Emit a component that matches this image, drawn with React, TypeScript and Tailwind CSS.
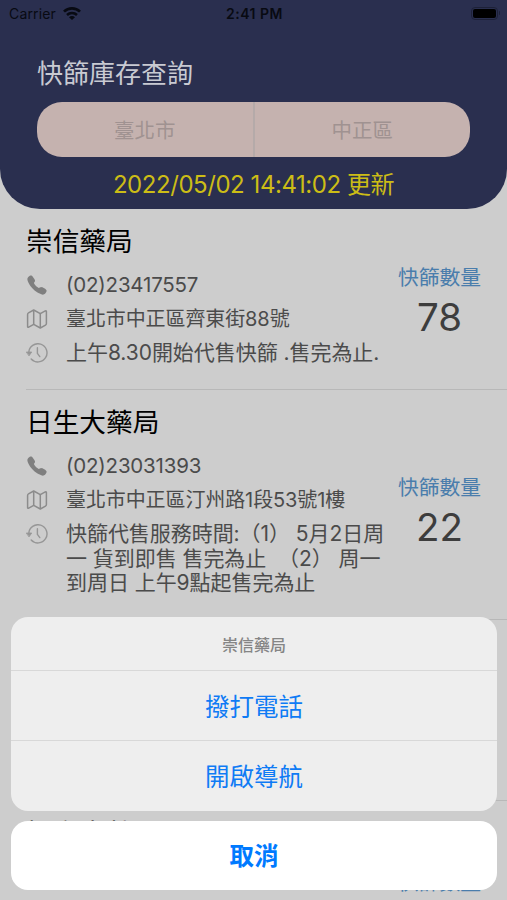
// src/App.tsx
import { IoCall } from "react-icons/io5"

type Pharmacy = {
  name: string
  phone: string
  address: string
  note: string[]
  count: number
  rowClass: string
  countClass: string
}

const pharmacies: Pharmacy[] = [
  {
    name: "崇信藥局",
    phone: "(02)23417557",
    address: "臺北市中正區齊東街88號",
    note: ["上午8.30開始代售快篩 .售完為止."],
    count: 78,
    rowClass: "h-[181px]",
    countClass: "mt-[54px]",
  },
  {
    name: "日生大藥局",
    phone: "(02)23031393",
    address: "臺北市中正區汀州路1段53號1樓",
    note: [
      "快篩代售服務時間:（1） 5月2日周",
      "一 貨到即售 售完為止  （2） 周一",
      "到周日 上午9點起售完為止",
    ],
    count: 22,
    rowClass: "h-[230px]",
    countClass: "mt-[83px]",
  },
  {
    name: "中正藥局",
    phone: "(02)23214567",
    address: "臺北市中正區",
    note: ["售完為止"],
    count: 60,
    rowClass: "h-[181px]",
    countClass: "mt-[54px]",
  },
  {
    name: "恒安大藥局",
    phone: "(02)23517890",
    address: "臺北市中正區",
    note: ["售完為止"],
    count: 45,
    rowClass: "h-[230px]",
    countClass: "mt-[67px]",
  },
]

function MapIcon() {
  return (
    <svg
      viewBox="0 0 22 20"
      className="mt-[8px] h-5 w-[22px] text-[#8c8c8c]"
      fill="none"
      stroke="currentColor"
      strokeWidth="1.5"
      strokeLinejoin="round"
    >
      <path d="M7.7 1 2.5 3.9q-.9.5-.9 1.5v12q0 1.3 1.1.7l5-2.7 6.6 3.6 5.2-2.9q.9-.5.9-1.5v-12q0-1.3-1.1-.7l-5 2.7Z" />
      <path d="M7.7 1v14.4M14.3 4.6v14.4" />
    </svg>
  )
}

function HistoryIcon() {
  return (
    <svg
      viewBox="0 0 22 20"
      className="h-5 w-[22px] text-[#969696]"
      fill="none"
      stroke="currentColor"
      strokeWidth="1.4"
      strokeLinecap="round"
      strokeLinejoin="round"
    >
      <path d="M2.8 9.4A9.1 9.1 0 1 1 5.2 16" />
      <path d="M11.4 4.8v5.6l2.4 3.2" />
      <path d="M.7 9h5L3.2 12.6Z" fill="currentColor" strokeWidth=".8" />
    </svg>
  )
}

function StatusBar() {
  return (
    <div className="grid h-7 grid-cols-3 items-center pr-[7px] pl-[9px] text-[14px] text-[#080a12]">
      <div className="-mt-0.5 flex items-center gap-[7px]">
        <span className="tracking-[0.15px]">Carrier</span>
        <svg viewBox="0 0 18 13" className="h-[13px] w-[18px]" fill="none" stroke="currentColor">
          <path d="M1 4.6a11.5 11.5 0 0 1 16 0" strokeWidth="2.7" />
          <path d="M4 8a7.2 7.2 0 0 1 10 0" strokeWidth="2.5" />
          <path d="M6 10.2a4.2 4.2 0 0 1 6 0L9 13Z" fill="currentColor" stroke="none" />
        </svg>
      </div>
      <span className="-mt-0.5 text-center font-semibold tracking-[0.5px] whitespace-nowrap">2:41 PM</span>
      <div className="-mt-0.5 flex items-center justify-end gap-px">
        <div className="h-[13px] w-[27px] rounded-[4px] border border-[#1d2138] p-px">
          <div className="h-full rounded-[2px] bg-black" />
        </div>
        <div className="h-1 w-[1.5px] rounded-r bg-[#1d2138]" />
      </div>
    </div>
  )
}

function Header() {
  return (
    <header className="h-[209px] shrink-0 rounded-b-[40px] bg-[#2a2f4f]">
      <StatusBar />
      <h1 className="mt-[27px] ml-[37px] h-9 text-[26px] leading-[37px] text-[#c8cad2]">快篩庫存查詢</h1>
      <div className="mx-[37px] mt-[11px] flex h-[55px] overflow-hidden rounded-[25px] bg-[#c5b2af] text-[20.5px] text-[#a09291]">
        <button className="flex-1 border-r-2 border-[#b5aaa9] pt-[3px]">臺北市</button>
        <button className="flex-1 pt-[3px]">中正區</button>
      </div>
      <p className="mt-2.5 text-center text-[24px] leading-9 tracking-[-0.45px] whitespace-nowrap text-[#ccbd16]">
        2022/05/02 14:41:02 更新
      </p>
    </header>
  )
}

function PharmacyRow({ item }: { item: Pharmacy }) {
  return (
    <li className={`ml-[26px] flex shrink-0 border-b border-[#b8b8b8] ${item.rowClass}`}>
      <div className="w-[363px] shrink-0 pt-3.5">
        <h2 className="h-9 text-[26.7px] leading-9 text-black">{item.name}</h2>
        <div className="mt-2 grid grid-cols-[40px_1fr] text-[#4b4b4b]">
          <IoCall className="mt-[7px] size-[22px] text-[#7f7f7f]" />
          <p className="h-[34px] text-[20.5px] leading-[36px] tracking-[-0.2px]">{item.phone}</p>
          <MapIcon />
          <p className="h-[34px] text-[20px] leading-[37px] tracking-[-0.1px] whitespace-nowrap">
            {item.address}
          </p>
          <div className="mt-[8px]">
            <HistoryIcon />
          </div>
          <div className="pt-[6px] text-[21px] leading-[24.7px] tracking-[-0.05px] whitespace-pre">
            {item.note.map((line) => (
              <p key={line}>{line}</p>
            ))}
          </div>
        </div>
      </div>
      <div className={`w-[101px] text-center ${item.countClass}`}>
        <div className="text-[20.8px] leading-[30px] text-[#4a7dac]">快篩數量</div>
        <div className="text-[38.5px] leading-[49px] text-[#3d3d3d]">{item.count}</div>
      </div>
    </li>
  )
}

function ActionSheet({ title }: { title: string }) {
  return (
    <div className="absolute right-[10px] bottom-[10px] left-[11px] flex flex-col gap-2.5 text-[24.5px] text-[#0f7bf5]">
      <div className="h-[194px] divide-y divide-[#d8d8d8] overflow-hidden rounded-[17px] bg-[#eee]">
        <div className="flex h-[54px] items-center justify-center pt-0.5 text-[16px] font-medium text-[#858585]">
          {title}
        </div>
        <button className="block h-[70px] w-full pt-[3px]">撥打電話</button>
        <button className="block h-[70px] w-full pt-[3px]">開啟導航</button>
      </div>
      <button className="h-[69px] rounded-[17px] bg-white pt-px font-bold text-[#007aff]">取消</button>
    </div>
  )
}

export default function App() {
  return (
    <main className="relative flex h-[900px] w-[507px] flex-col overflow-hidden bg-[#cdcdcd] font-[Inter,'Noto_Sans_CJK_TC',sans-serif]">
      <Header />
      <ul className="flex min-h-0 flex-1 flex-col overflow-hidden">
        {pharmacies.map((item) => (
          <PharmacyRow key={item.name} item={item} />
        ))}
      </ul>
      <ActionSheet title={pharmacies[0].name} />
    </main>
  )
}
